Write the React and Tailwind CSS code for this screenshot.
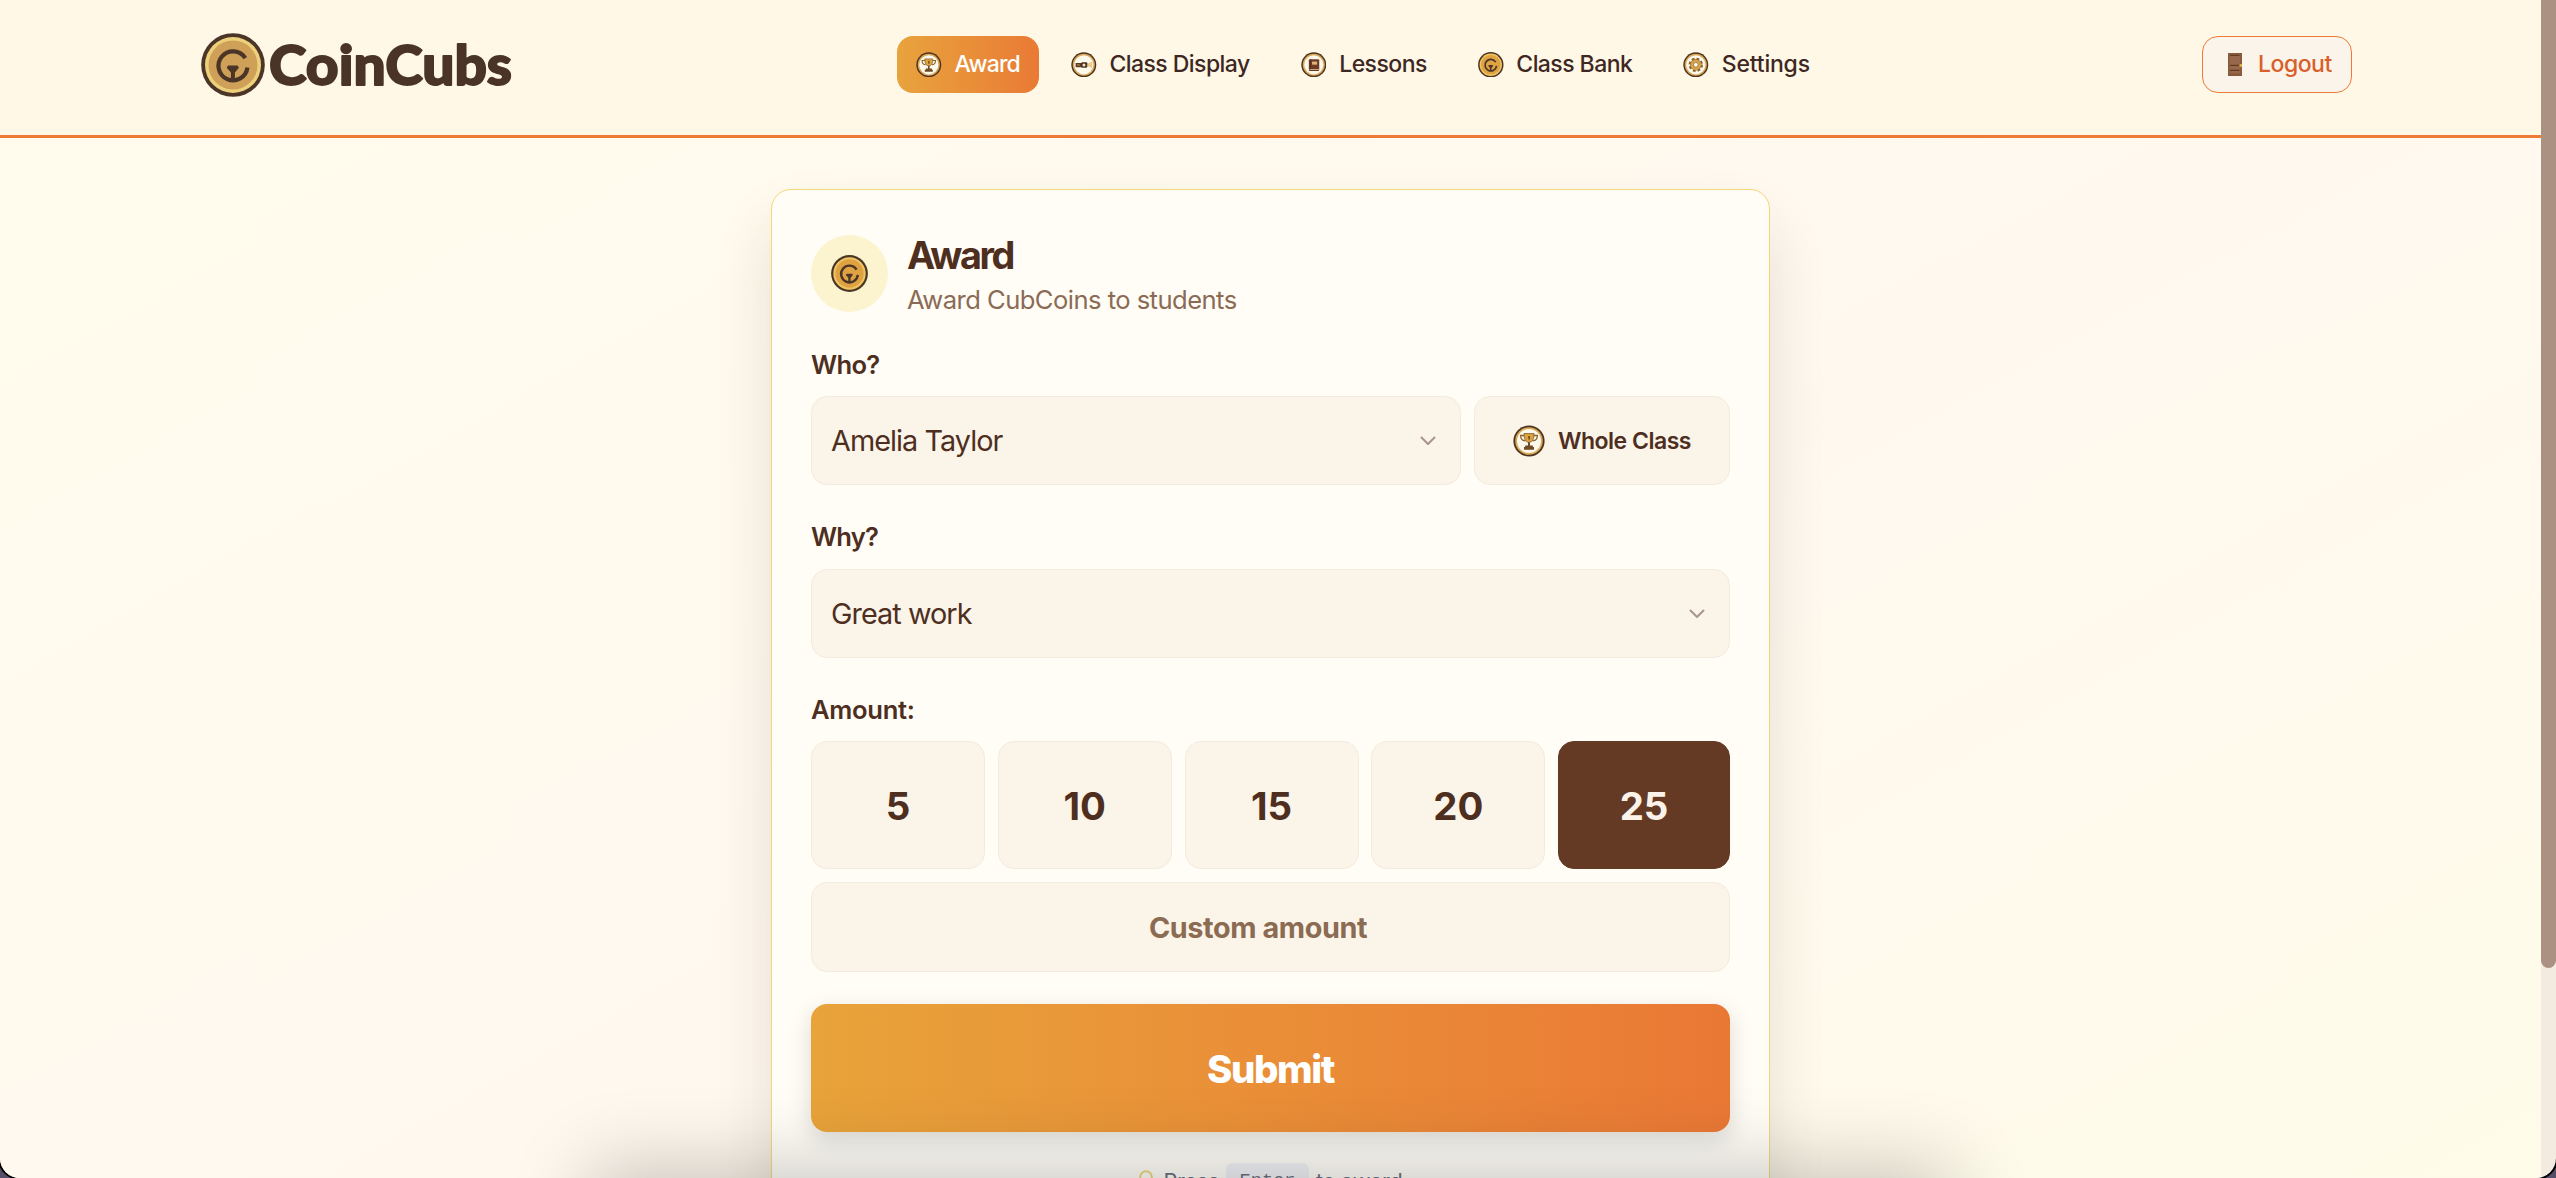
import { useState } from "react";

const navItems = [
  { id: "award", label: "Award", icon: TrophyIcon, tracking: "tracking-[-0.85px]" },
  { id: "display", label: "Class Display", icon: ProjectorIcon, tracking: "tracking-[-0.55px]" },
  { id: "lessons", label: "Lessons", icon: BookIcon, tracking: "tracking-[-0.55px]" },
  { id: "bank", label: "Class Bank", icon: CoinIcon, tracking: "tracking-[-0.56px]" },
  { id: "settings", label: "Settings", icon: GearIcon, tracking: "tracking-[-0.2px]" },
];

const amounts = [5, 10, 15, 20, 25];

function Badge({ className, children }) {
  return (
    <svg viewBox="0 0 32 32" className={className}>
      <circle cx="16" cy="16" r="15.6" fill="#4d3420" />
      <circle cx="16" cy="16" r="13.8" fill="#d9a95a" />
      <circle cx="16" cy="16" r="12" fill="#fdf8ec" />
      {children}
    </svg>
  );
}

function TrophyIcon({ className }) {
  return (
    <Badge className={className}>
      <path
        d="M11.5 10.5H7.6c0 3.2 1.6 5.2 4.6 5.4M20.5 10.5h3.9c0 3.2-1.6 5.2-4.6 5.4"
        fill="none"
        stroke="#8a6430"
        strokeWidth="1.3"
      />
      <path d="M11 8.6h10c0 5.2-1.4 8.7-5 8.7s-5-3.5-5-8.7z" fill="#dfa33c" stroke="#7a5528" strokeWidth="0.8" />
      <path d="M15.4 11h1.4v3.6h-1.4z" fill="#5a3a1c" />
      <path d="M15 17.2h2v3.3h2.8v1.6H21v2.6H11v-2.6h1.200v-1.6H15z" fill="#6f4a26" />
    </Badge>
  );
}

function ProjectorIcon({ className }) {
  return (
    <Badge className={className}>
      <path d="M20.5 14.8l6-3v8.4l-6-2.8z" fill="#ecc98d" />
      <rect x="5.8" y="13.6" width="8.5" height="5.4" rx="0.8" fill="#5a3b22" />
      <rect x="12.8" y="12.8" width="7.6" height="6.8" rx="1.4" fill="#4a2f1b" />
      <circle cx="16.2" cy="16.2" r="1.9" fill="#f3e3c4" />
      <path d="M7.5 15.2H11v2H7.5z" fill="#9a7550" />
    </Badge>
  );
}

function BookIcon({ className }) {
  return (
    <Badge className={className}>
      <rect x="9.8" y="9" width="13" height="14.6" rx="1.2" fill="#6d3a22" />
      <path d="M10.6 21.4h12.2v0.9H10.600z" fill="#e7cfa6" />
      <rect x="13.8" y="12" width="6.4" height="3.8" fill="#e0b478" />
      <path d="M11.8 9v12.4" stroke="#4b2614" strokeWidth="0.8" />
    </Badge>
  );
}

function GearIcon({ className }) {
  return (
    <Badge className={className}>
      <circle cx="16" cy="16" r="7.4" fill="none" stroke="#8a6228" strokeWidth="3.2" strokeDasharray="3.300 2.512" />
      <circle cx="16" cy="16" r="4.9" fill="none" stroke="#8a6228" strokeWidth="4.4" />
      <circle cx="16" cy="16" r="4.8" fill="none" stroke="#d6a24c" strokeWidth="3.6" />
      <circle cx="16" cy="16" r="2.8" fill="#fdf8ec" stroke="#8a6228" strokeWidth="0.7" />
    </Badge>
  );
}

/* Coin with the "C" shaped cub face */
function CoinIcon({ className, rim = "#f0c560", face = "#dfa243" }) {
  return (
    <svg viewBox="0 0 64 64" className={className}>
      <circle cx="32" cy="32" r="31.8" fill="#4a3526" />
      <circle cx="32" cy="32" r="28" fill={rim} />
      <circle cx="32" cy="32" r="24.5" fill={face} />
      <path
        d="M44.300 25.200A14.500 14.500 0 1 0 46.400 34.500"
        fill="none"
        stroke="#4a3526"
        strokeWidth="4.2"
      />
      <path
        d="M27 32.6h9.6l1.300 2.200-4 4.600v7.600h-4v-7.600l-4.200-4.600z"
        fill="#4a3526"
      />
    </svg>
  );
}

function DoorIcon() {
  return (
    <svg viewBox="0 0 14 23" className="h-[23px] w-[14px]">
      <rect width="14" height="23" fill="#8a5a3c" />
      <rect x="1.5" y="1.5" width="10.5" height="20" fill="#98684a" />
      <path d="M2 2.300h9.500M2 12.300h9.500M2 17.300h9.500" stroke="#5f3a25" strokeWidth="1.2" />
      <path d="M2 21h9.500" stroke="#7a4e34" strokeWidth="0.8" />
      <circle cx="12.7" cy="12.5" r="1.4" fill="#e0b548" />
    </svg>
  );
}

function Chevron() {
  return (
    <svg viewBox="0 0 16 10" className="h-[10px] w-[16px]" fill="none" stroke="#a8958a" strokeWidth="2" strokeLinecap="round" strokeLinejoin="round">
      <path d="M1.5 1.5L8 8l6.500-6.500" />
    </svg>
  );
}

function Logo() {
  return (
    <div className="flex items-center">
      <CoinIcon className="h-16 w-16" rim="#ecd07c" face="#cfa158" />
      <svg viewBox="0 0 250 64" className="h-16 w-[250px] overflow-visible">
        <text
          x="4"
          y="51.5"
          textLength="243"
          lengthAdjust="spacingAndGlyphs"
          fill="#493426"
          stroke="#493426"
          strokeWidth="1.8"
          strokeLinejoin="round"
          className="font-['Lato',sans-serif] text-[54.5px] font-black"
        >
          CoinCubs
        </text>
      </svg>
    </div>
  );
}

function Header({ active, onSelect }) {
  return (
    <header className="flex h-[138px] items-start justify-between border-b-[3px] border-[#ed7b36] bg-[#fff8e7] pr-[189px] pl-[201px]">
      <div className="flex w-[696px] pt-[33px]">
        <Logo />
      </div>
      <nav className="flex flex-1 gap-[12.8px] pt-9">
        {navItems.map(({ id, label, icon: Icon, tracking }) => (
          <button
            key={id}
            onClick={() => onSelect(id)}
            className={`flex h-[57px] items-center gap-[12.8px] rounded-2xl px-[19.2px] text-[23px] font-medium whitespace-nowrap ${tracking} ${
              active === id
                ? "bg-linear-to-r from-[#e8a33d] to-[#e97a35] text-white"
                : "text-[#3e2723]"
            }`}
          >
            <Icon className="size-[25.6px]" />
            <span>{label}</span>
          </button>
        ))}
      </nav>
      <div className="pt-9">
        <button className="flex h-[57px] w-[150px] items-center gap-[16px] rounded-2xl border border-[#ed7b36] bg-[#fbf4ea] pl-[25px] text-[23px] font-medium tracking-[-0.5px] text-[#d95f2b]">
          <DoorIcon />
          <span>Logout</span>
        </button>
      </div>
    </header>
  );
}

function SelectBox({ value, className }) {
  return (
    <button
      className={`flex h-[89px] items-center justify-between rounded-2xl border border-[#f4ebdf] bg-[#fbf4e9] pr-[24px] pl-[19px] text-[28.8px] tracking-[-0.95px] ${className}`}
    >
      <span>{value}</span>
      <Chevron />
    </button>
  );
}

function AwardCard() {
  const [amount, setAmount] = useState(25);

  return (
    <section className="mt-[51px] flex h-[1150px] w-[999px] flex-col rounded-[20px] border border-[#f5d678] bg-[#fffdf6] px-[39px] pt-[45px] text-[#4e2f1f] shadow-[0_32px_64px_-8px_rgba(62,39,35,0.16)]">
      <div className="flex gap-[19px]">
        <div className="flex size-[77px] items-center justify-center rounded-full bg-[#fcf3cf]">
          <CoinIcon className="size-[37px]" />
        </div>
        <div className="flex flex-col">
          <h1 className="text-[37.8px] leading-[40px] font-bold tracking-[-2.4px]">Award</h1>
          <p className="mt-[7px] text-[25.6px] leading-[36px] tracking-[-0.55px] text-[#8b6b55]">Award CubCoins to students</p>
        </div>
      </div>

      <label className="mt-[29px] text-[25.6px] leading-[36px] font-semibold tracking-[-0.7px]">Who?</label>
      <div className="mt-[13px] flex gap-[13px]">
        <SelectBox value="Amelia Taylor" className="flex-1" />
        <button className="flex h-[89px] w-[256px] items-center justify-center gap-[13px] rounded-2xl border border-[#f4ebdf] bg-[#fbf4e9] pt-px text-[23px] font-semibold tracking-[-0.5px]">
          <TrophyIcon className="size-8" />
          <span>Whole Class</span>
        </button>
      </div>

      <label className="mt-[34px] text-[25.6px] leading-[36px] font-semibold tracking-[-0.8px]">Why?</label>
      <SelectBox value="Great work" className="mt-[14px]" />

      <label className="mt-[34px] text-[25.6px] leading-[36px] font-semibold tracking-[-0.3px]">Amount:</label>
      <div className="mt-[13px] grid grid-cols-[174px_174px_174px_174px_172px] justify-between">
        {amounts.map((n) => (
          <button
            key={n}
            onClick={() => setAmount(n)}
            className={`h-32 rounded-2xl border pt-[3px] text-[38.4px] font-bold ${
              amount === n
                ? "border-[#643a25] bg-[#643a25] text-[#fbf3e9]"
                : "border-[#f4ebdf] bg-[#fbf4e9]"
            }`}
          >
            {n}
          </button>
        ))}
      </div>
      <button className="mt-[13px] h-[90px] shrink-0 rounded-2xl border border-[#f4ebdf] bg-[#fbf4e9] pt-[2px] pr-[25px] text-[28.8px] font-bold tracking-[-0.4px] text-[#8b6b52]">
        Custom amount
      </button>

      <button className="mt-8 h-32 shrink-0 rounded-2xl bg-linear-to-r from-[#e8a33a] to-[#ea7835] pt-[3px] text-[38.4px] font-extrabold tracking-[-1.4px] text-white shadow-[0_8px_24px_rgba(0,0,0,0.14)]">
        Submit
      </button>

      <div className="mt-[31px] flex items-center justify-center gap-[7px] text-[21.6px] leading-[36px] tracking-[-0.3px] text-[#6b7080]">
        <svg viewBox="0 0 14 22" className="mr-[4px] h-[22px] w-[14px]" fill="none" stroke="#ecd67e" strokeWidth="2">
          <circle cx="7" cy="7" r="5.8" />
          <path d="M4.5 15h5M4.5 18h5" stroke="#a8a89c" />
        </svg>
        <span>Press</span>
        <kbd className="rounded-md bg-[#f0f1f5] px-[13.5px] font-['Liberation_Mono',monospace] text-[18.7px] tracking-normal">Enter</kbd>
        <span>to award</span>
      </div>
    </section>
  );
}

export default function App() {
  const [active, setActive] = useState("award");

  return (
    <div className="h-[1178px] w-[2556px] overflow-hidden bg-[#544e68]">
      <div className="relative flex h-full overflow-hidden rounded-b-[20px] bg-[#f4ebe0] font-['Inter',sans-serif] shadow-[0_0_0_2px_#000]">
        <div className="h-[1434px] w-[2541px] bg-linear-to-br from-[#fffcec] via-[#fff8ef] to-[#fefce8]">
          <Header active={active} onSelect={setActive} />
          <main className="flex justify-center">
            <AwardCard />
          </main>
        </div>
        <div className="h-[968px] w-[15px] rounded-b-full bg-[#ab9181]" />
        {/* Soft dark glow rising from the bottom edge */}
        <div className="pointer-events-none absolute top-[1188px] left-[610px] h-[100px] w-[1320px] shadow-[0_0_80px_20px_rgba(0,0,0,0.22)]" />
      </div>
    </div>
  );
}
